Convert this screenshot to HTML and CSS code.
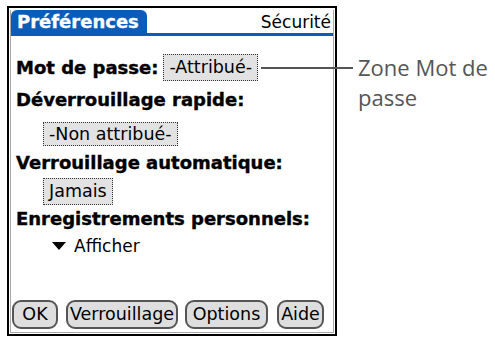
FILE: index.html
```html
<!DOCTYPE html>
<html lang="fr">
<head>
<meta charset="utf-8">
<title>Préférences - Sécurité</title>
<link rel="stylesheet" href="styles.css">
</head>
<body>
<div class="device">
  <div class="screen">
    <div class="titlebar">
      <span class="tab">Préférences</span>
      <span class="title-right">Sécurité</span>
    </div>
    <div class="content">
      <div class="row row-first">
        <span class="label">Mot de passe:</span>
        <span class="field field-pass">-Attribué-</span>
      </div>
      <div class="label label-2">Déverrouillage rapide:</div>
      <div class="indent indent-2"><span class="field">-Non attribué-</span></div>
      <div class="label label-3">Verrouillage automatique:</div>
      <div class="indent indent-3"><span class="field">Jamais</span></div>
      <div class="label label-4">Enregistrements personnels:</div>
      <div class="popup"><span class="tri"></span><span>Afficher</span></div>
    </div>
    <div class="buttons">
      <span class="btn btn-ok">OK</span>
      <span class="btn btn-lock">Verrouillage</span>
      <span class="btn btn-opt">Options</span>
      <span class="btn btn-help">Aide</span>
    </div>
  </div>
</div>
<div class="callout">
  <span class="leader"></span>
  <span class="callout-text">Zone Mot de<br>passe</span>
</div>
</body>
</html>
```

FILE: styles.css
```css
html, body {
  margin: 0;
  padding: 0;
  background: #fff;
}
body {
  position: relative;
  width: 495px;
  height: 339px;
  overflow: hidden;
  font-family: "DejaVu Sans", sans-serif;
  color: #000;
}
.device {
  margin: 6px 0 0 7px;
  width: 326px;
  height: 326px;
  border: 2px solid #000;
  display: flex;
  flex-direction: column;
}
.screen {
  margin: 2px 1px 1px 1px;
  flex: 1;
  border: 1px solid #a8a8a8;
  border-top: none;
  display: flex;
  flex-direction: column;
}
.titlebar {
  height: 23px;
  border-bottom: 3px solid #0b5cb8;
  display: flex;
  align-items: flex-end;
  justify-content: space-between;
}
.tab {
  width: 136px;
  height: 23px;
  box-sizing: border-box;
  background: #0b5cb8;
  color: #fff;
  font-weight: bold;
  font-size: 18px;
  line-height: 24px;
  padding-left: 6px;
  border-radius: 6px 6px 0 0;
  -webkit-text-stroke: 0.3px #fff;
}
.title-right {
  font-size: 17px;
  line-height: 22px;
  padding-right: 2px;
}
.content {
  padding-left: 5px;
  display: flex;
  flex-direction: column;
  align-items: flex-start;
}
.label {
  font-weight: bold;
  font-size: 18px;
  line-height: 22px;
  white-space: nowrap;
  -webkit-text-stroke: 0.4px #000;
}
.row {
  display: flex;
  align-items: center;
}
.row-first {
  margin-top: 18px;
}
.row .label {
  margin-right: 5px;
}
.field {
  display: inline-block;
  box-sizing: border-box;
  height: 27px;
  line-height: 25px;
  padding: 0 5px;
  font-size: 17.5px;
  background: #e2e2e2;
  border: 1px dotted #333;
}
.label-2 { margin-top: 8px; }
.indent { padding-left: 27px; }
.indent-2 { margin-top: 11px; }
.indent-2 .field { height: 24px; line-height: 22px; }
.label-3 { margin-top: 6px; }
.indent-3 { margin-top: 4px; }
.label-4 { margin-top: 3px; }
.popup {
  margin-top: 5px;
  padding-left: 36px;
  display: flex;
  align-items: center;
  gap: 8px;
  font-size: 17px;
  line-height: 22px;
}
.tri {
  width: 0;
  height: 0;
  border-left: 7px solid transparent;
  border-right: 7px solid transparent;
  border-top: 8px solid #000;
}
.buttons {
  margin-top: auto;
  padding: 0 0 3px 1px;
  display: flex;
  gap: 8px;
}
.btn {
  box-sizing: border-box;
  height: 29px;
  line-height: 25px;
  text-align: center;
  font-size: 17.5px;
  background: #dedede;
  border: 2px solid #555;
  border-radius: 9px;
}
.btn-ok { width: 46px; }
.btn-lock { width: 112px; }
.btn-opt { width: 83px; margin-left: -1px; }
.btn-help { width: 47px; margin-left: 1px; }
.callout {
  position: absolute;
  left: 261px;
  top: 52px;
  width: 234px;
  height: 70px;
}
.leader {
  position: absolute;
  left: 0;
  top: 15px;
  width: 92px;
  height: 2px;
  background: #555;
}
.callout-text {
  position: absolute;
  left: 97px;
  top: 0;
  font-family: "Open Sans", "Liberation Sans", sans-serif;
  font-size: 22px;
  line-height: 30px;
  color: #555;
  white-space: nowrap;
}
```
